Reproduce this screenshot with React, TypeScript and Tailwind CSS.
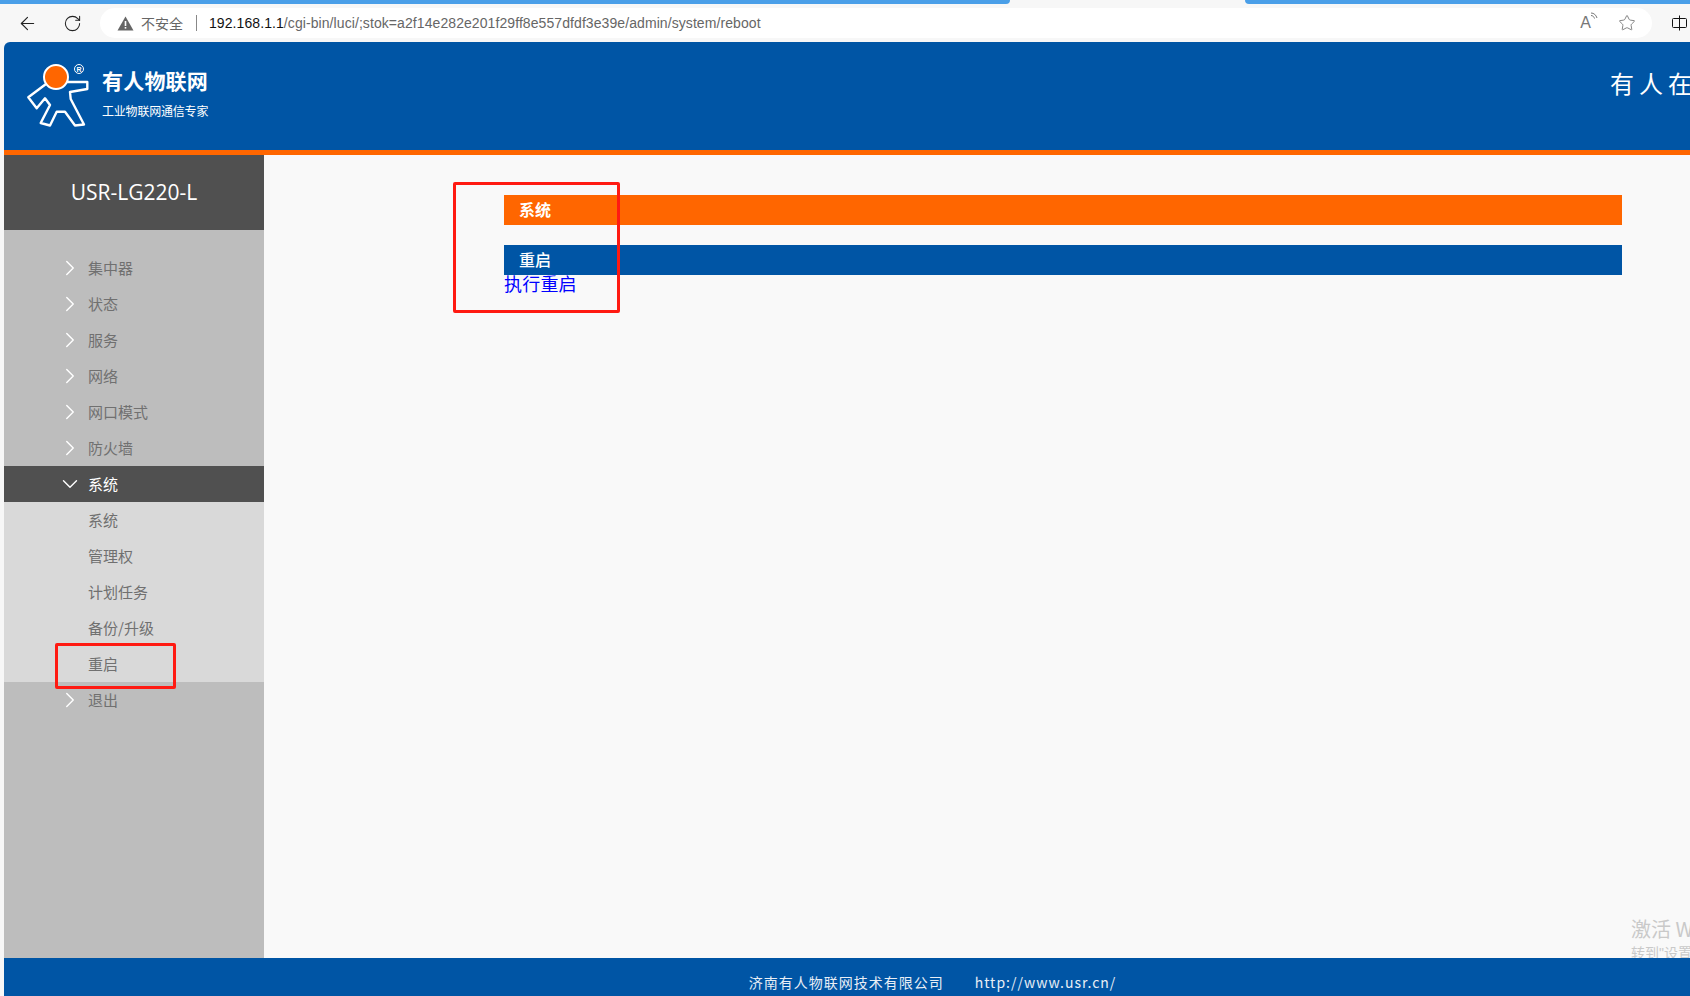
import { ArrowLeft, RotateCw, Star, ChevronRight, ChevronDown } from "lucide-react";

const cjk = "font-['Noto_Sans_CJK_SC','Noto_Sans',sans-serif]";

const before = ["集中器", "状态", "服务", "网络", "网口模式", "防火墙"];
const subItems = ["系统", "管理权", "计划任务", "备份/升级", "重启"];

function Logo() {
  return (
    <svg width="76" height="76" viewBox="0 0 76 76" fill="none" className="shrink-0">
      <path
        d="M26 27 L8.300 40.300 L16.700 51.300 L25 41.300 L30 48 L20.700 66 L30 68.500 L36.700 54.700 L45 54.700 L55 68.500 L64 67.500 L50.700 42 L50 35 L67.300 32 L67.300 25 L46 25"
        stroke="#fff"
        strokeWidth="2.400"
        strokeLinejoin="round"
      />
      <circle cx="36" cy="20" r="12" fill="#ff6600" stroke="#fff" strokeWidth="2" />
      <circle cx="59" cy="12" r="4.500" stroke="#fff" strokeWidth="1" />
      <text x="59" y="14.500" textAnchor="middle" fontSize="7" fontWeight="700" fill="#fff" fontFamily="Liberation Sans">R</text>
    </svg>
  );
}

function BrowserBar() {
  return (
    <div className="shrink-0 bg-[#f7f7f7]">
      <div className="flex h-[4px] justify-between">
        <div className="w-[1010px] rounded-br-[4px] bg-[#4a9fe8]" />
        <div className="w-[445px] rounded-bl-[4px] bg-[#4a9fe8]" />
      </div>
      <div className="flex h-[38px] items-start pt-[4px]">
        <div className="flex h-[30px] w-[100px] items-center text-[#222]">
          <ArrowLeft size={21} strokeWidth={1.3} className="ml-[17px]" />
          <RotateCw size={19} strokeWidth={1.3} className="ml-[25px]" />
        </div>
        <div className="flex h-[30px] w-[1552px] items-center rounded-full bg-white pl-[17px] text-[14px] font-['Liberation_Sans',sans-serif]">
          <svg width="17" height="15" viewBox="0 0 17 15" className="shrink-0">
            <path d="M8.5 0.5 L16.5 14.5 L0.5 14.5 Z" fill="#666" />
            <rect x="7.7" y="5" width="1.6" height="5" fill="#fff" />
            <rect x="7.7" y="11" width="1.6" height="1.6" fill="#fff" />
          </svg>
          <span className={`ml-[7px] text-[#666] ${cjk}`}>不安全</span>
          <span className="ml-[13px] h-[16px] w-px bg-[#888]" />
          <span className="ml-[12px] tracking-[0.08px] text-[#111]">192.168.1.1</span>
          <span className="tracking-[0.08px] text-[#666]">/cgi-bin/luci/;stok=a2f14e282e201f29ff8e557dfdf3e39e/admin/system/reboot</span>
          <span className="ml-auto flex items-center text-[#777]">
            <span className="relative text-[16px]">
              A
              <svg width="8" height="8" viewBox="0 0 8 8" fill="none" stroke="#777" className="absolute right-[-7px] top-[1px]">
                <path d="M1 1 C4 1 6 3 7 6" />
                <path d="M1 3.500 C3 3.500 4 5 4.500 6.500" />
              </svg>
            </span>
            <Star size={18} strokeWidth={1.2} className="ml-[27px] mr-[16px]" />
          </span>
        </div>
        <svg width="18" height="16" viewBox="0 0 18 16" fill="none" stroke="#111" className="ml-[20px] mt-[7px] shrink-0">
          <rect x="0.5" y="3.500" width="14" height="9" rx="1" />
          <path d="M7.500 0.500 V15.500" />
        </svg>
      </div>
    </div>
  );
}

function MenuRow({ label, open = false }: { label: string; open?: boolean }) {
  return (
    <div className={`flex h-[36px] items-center text-[15px] ${open ? "bg-[#505050] text-white" : "text-[#707070]"}`}>
      <span className="flex w-[84px] justify-end pr-[5px] text-white">
        {open ? <ChevronDown size={26} strokeWidth={1.3} /> : <ChevronRight size={26} strokeWidth={1.3} />}
      </span>
      {label}
    </div>
  );
}

export default function App() {
  return (
    <div className={`flex h-[996px] w-[1690px] flex-col overflow-hidden bg-[#f7f7f7] ${cjk}`}>
      <BrowserBar />
      <div className="ml-[4px] flex min-h-0 flex-1 flex-col overflow-hidden rounded-tl-[6px]">
        <header className="flex h-[108px] shrink-0 items-start overflow-hidden bg-[#0055a5] text-white">
          <div className="ml-[16px] mt-[15px] shrink-0">
            <Logo />
          </div>
          <div className="ml-[6px] mt-[24px] w-[106px] shrink-0 whitespace-nowrap">
            <div className="text-[21px] font-bold leading-[28px] tracking-[0.2px]">有人物联网</div>
            <div className="mt-[9px] text-[12px] leading-[16px] tracking-[-0.2px]">工业物联网通信专家</div>
          </div>
          <div className="ml-[1402px] mt-[26px] shrink-0 whitespace-nowrap text-[24px] leading-[30px] tracking-[5px]">有人在线</div>
        </header>
        <div className="h-[5px] shrink-0 bg-[#ff6600]" />
        <div className="relative flex min-h-0 flex-1 overflow-hidden bg-[#f9f9f9]">
          <aside className="flex w-[260px] shrink-0 flex-col bg-[#bdbdbd]">
            <div className="flex h-[75px] items-start justify-center bg-[#505050] pt-[23px] font-['Open_Sans',sans-serif] text-[21px] leading-[28px] text-white">
              USR-LG220-L
            </div>
            <nav className="pt-[20px]">
              {before.map((label) => (
                <MenuRow key={label} label={label} />
              ))}
              <MenuRow label="系统" open />
              <div className="bg-[#d9d9d9]">
                {subItems.map((label) => (
                  <div key={label} className="flex h-[36px] items-center pl-[84px] text-[15px] text-[#707070]">
                    {label}
                  </div>
                ))}
              </div>
              <MenuRow label="退出" />
            </nav>
          </aside>
          <main className="ml-[240px] w-[1118px] pt-[40px] text-white">
            <div className="flex h-[30px] items-center bg-[#ff6600] pl-[15px] pb-[2px] text-[16px] font-bold">系统</div>
            <div className="mt-[20px] flex h-[30px] items-center bg-[#0055a5] pl-[15px] pb-[2px] text-[16px] font-medium">重启</div>
            <a className="block text-[18px] leading-[16px] tracking-[0.2px] text-[#0000ff]">执行重启</a>
          </main>
          {/* annotation boxes drawn over the screenshot */}
          <div className="absolute left-[449px] top-[27px] h-[131px] w-[167px] rounded-[2px] border-[3px] border-[#ff1a12]" />
          <div className="absolute left-[51px] top-[488px] h-[46px] w-[121px] rounded-[2px] border-[3px] border-[#ff1a12]" />
          <div className="absolute left-[1627px] top-[760px] whitespace-nowrap text-[#c9c9c9]">
            <div className="text-[20px] leading-[28px]">激活 Windows</div>
            <div className="text-[14px] leading-[19px]">转到<span className="font-['Liberation_Sans',sans-serif]">"</span>设置<span className="font-['Liberation_Sans',sans-serif]">"</span>以激活</div>
          </div>
        </div>
        <footer className="flex h-[38px] shrink-0 items-start justify-center bg-[#0055a5] pl-[171px] pt-[13px] text-[14px] leading-[22px] tracking-[1px] text-[#e8eef5]">
          <span>济南有人物联网技术有限公司</span>
          <span className="ml-[31px]">http://www.usr.cn/</span>
        </footer>
      </div>
    </div>
  );
}
